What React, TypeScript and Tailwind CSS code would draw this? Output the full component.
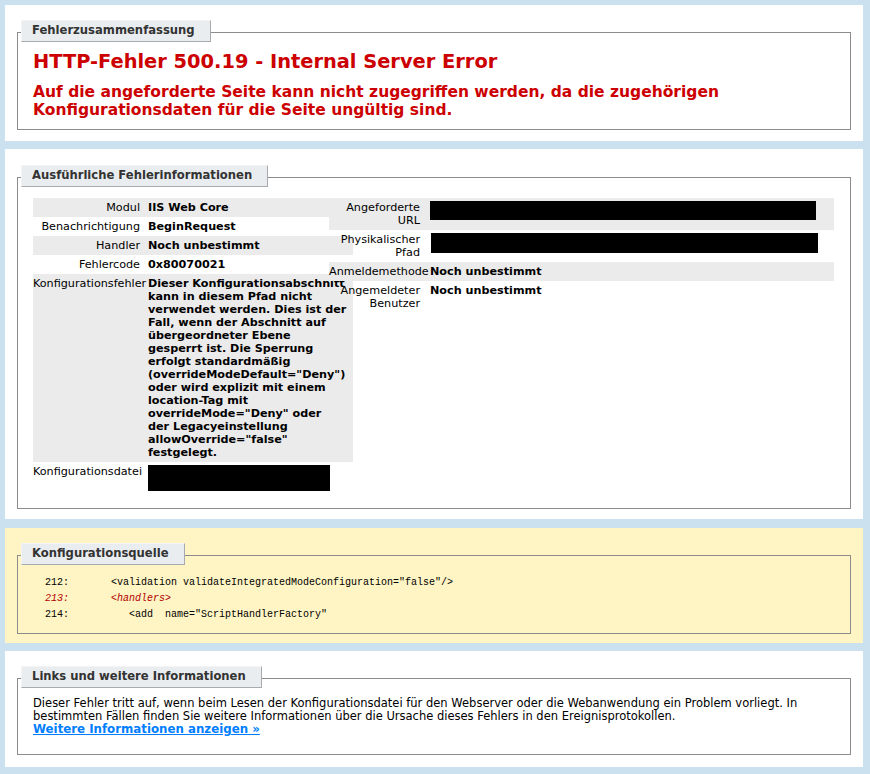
import React from "react";

const FONT = { fontFamily: '"DejaVu Sans", Verdana, sans-serif' };

function Legend({ children }: { children: React.ReactNode }) {
  return (
    <div className="-mt-[13px] -ml-[12px] self-start h-[22px] pl-[10px] pr-[15px] flex items-center bg-[#e9edf0] border-t border-l border-t-[#f4f4f4] border-l-[#f4f4f4] border-r border-b border-r-[#a7abaf] border-b-[#a7abaf] text-[#333] font-bold text-[11.6px]">
      {children}
    </div>
  );
}

function Fieldset({ title, children, pb = "pb-[10px]" }: { title: string; children: React.ReactNode; pb?: string }) {
  return (
    <div className={`border border-[#8c8c8c] px-[15px] ${pb} flex flex-col`}>
      <Legend>{title}</Legend>
      {children}
    </div>
  );
}

function Row({ label, children, gray, labelW, gap }: { label: React.ReactNode; children: React.ReactNode; gray?: boolean; labelW: string; gap: string }) {
  return (
    <div className={`flex py-[3px] leading-[13px] ${gray ? "bg-[#ebebeb]" : ""}`}>
      <div className={`${labelW} shrink-0 text-right`}>{label}</div>
      <div className={`${gap} font-bold`}>{children}</div>
    </div>
  );
}

export default function App() {
  const lines = [
    "Dieser Konfigurationsabschnitt",
    "kann in diesem Pfad nicht",
    "verwendet werden. Dies ist der",
    "Fall, wenn der Abschnitt auf",
    "übergeordneter Ebene",
    "gesperrt ist. Die Sperrung",
    "erfolgt standardmäßig",
    '(overrideModeDefault="Deny")',
    "oder wird explizit mit einem",
    "location-Tag mit",
    'overrideMode="Deny" oder',
    "der Legacyeinstellung",
    'allowOverride="false"',
    "festgelegt.",
  ];
  return (
    <div className="w-[870px] min-h-[774px] bg-[#cbe1ef] pt-[5px] pl-[5px] pb-[8px] text-[11.2px] text-black" style={FONT}>
      {/* Panel 1 */}
      <div className="w-[858px] bg-white px-[12px] pt-[27px] pb-[11px]">
        <Fieldset title="Fehlerzusammenfassung">
          <div className="mt-[8px] text-[19.4px] leading-[23px] font-bold text-[#cc0000]">
            HTTP-Fehler 500.19 - Internal Server Error
          </div>
          <div className="mt-[10px] text-[15.5px] leading-[18px] font-bold text-[#cc0000]">
            Auf die angeforderte Seite kann nicht zugegriffen werden, da die zugehörigen
            <br />
            Konfigurationsdaten für die Seite ungültig sind.
          </div>
        </Fieldset>
      </div>

      {/* Panel 2 */}
      <div className="w-[858px] bg-white mt-[8px] px-[12px] pt-[28px] pb-[10px]">
        <Fieldset title="Ausführliche Fehlerinformationen">
          <div className="mt-[11px] mb-[4px] flex">
            <div className="w-[280px] mr-[16px] shrink-0">
              <div className="w-[320px]">
                <Row gray label="Modul" labelW="w-[107px]" gap="ml-[8px]">IIS Web Core</Row>
                <Row label="Benachrichtigung" labelW="w-[107px]" gap="ml-[8px]">BeginRequest</Row>
                <Row gray label="Handler" labelW="w-[107px]" gap="ml-[8px]">Noch unbestimmt</Row>
                <Row label="Fehlercode" labelW="w-[107px]" gap="ml-[8px]">0x80070021</Row>
                <Row gray label={<span className="whitespace-nowrap">Konfigurationsfehler</span>} labelW="w-[107px]" gap="ml-[8px]">
                  {lines.map((l, i) => (
                    <div key={i} className="whitespace-nowrap">{l}</div>
                  ))}
                </Row>
                <Row label="Konfigurationsdatei" labelW="w-[107px]" gap="ml-[8px]">
                  <div className="w-[182px] h-[26px] bg-black" />
                </Row>
              </div>
            </div>
            <div className="w-[505px] shrink-0">
              <Row gray label={<>Angeforderte<br />URL</>} labelW="w-[91px]" gap="ml-[10px]">
                <div className="w-[386px] h-[19px] bg-black" />
              </Row>
              <Row label={<>Physikalischer<br />Pfad</>} labelW="w-[91px]" gap="ml-[11px]">
                <div className="w-[387px] h-[20px] bg-black" />
              </Row>
              <Row gray label={<span className="whitespace-nowrap">Anmeldemethode</span>} labelW="w-[91px]" gap="ml-[10px]">
                Noch unbestimmt
              </Row>
              <Row label={<>Angemeldeter<br />Benutzer</>} labelW="w-[91px]" gap="ml-[10px]">
                Noch unbestimmt
              </Row>
            </div>
          </div>
        </Fieldset>
      </div>

      {/* Panel 3 */}
      <div className="w-[858px] bg-[#fff5c4] mt-[9px] px-[12px] pt-[27px] pb-[9px]">
        <Fieldset title="Konfigurationsquelle">
          <pre
            className="mt-[10px] text-[10px] leading-[16px] whitespace-pre"
            style={{ fontFamily: '"Liberation Mono", "Courier New", monospace' }}
          >
            <div>{"  212:       "}<span>{'<validation validateIntegratedModeConfiguration="false"/>'}</span></div>
            <div className="text-[#b00000] italic">{"  213:       <handlers>"}</div>
            <div>{"  214:          <add  name=\"ScriptHandlerFactory\""}</div>
          </pre>
        </Fieldset>
      </div>

      {/* Panel 4 */}
      <div className="w-[858px] bg-white mt-[8px] px-[12px] pt-[27px] pb-[12px]">
        <Fieldset title="Links und weitere Informationen" pb="pb-[8px]">
          <div className="mt-[9px] mb-[10px] leading-[13px] text-[11.5px]">
            Dieser Fehler tritt auf, wenn beim Lesen der Konfigurationsdatei für den Webserver oder die Webanwendung ein Problem vorliegt. In
            <br />
            bestimmten Fällen finden Sie weitere Informationen über die Ursache dieses Fehlers in den Ereignisprotokollen.
            <br />
            <a href="#" className="text-[#007eff] font-bold underline text-[11.8px]">Weitere Informationen anzeigen »</a>
          </div>
        </Fieldset>
      </div>
    </div>
  );
}
